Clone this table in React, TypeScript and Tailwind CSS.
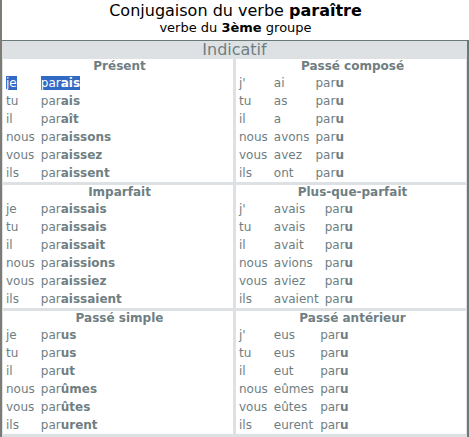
const simple = [
  {
    title: "Présent",
    rows: [
      ["je", "par", "ais"],
      ["tu", "par", "ais"],
      ["il", "par", "aît"],
      ["nous", "par", "aissons"],
      ["vous", "par", "aissez"],
      ["ils", "par", "aissent"],
    ],
  },
  {
    title: "Imparfait",
    rows: [
      ["je", "par", "aissais"],
      ["tu", "par", "aissais"],
      ["il", "par", "aissait"],
      ["nous", "par", "aissions"],
      ["vous", "par", "aissiez"],
      ["ils", "par", "aissaient"],
    ],
  },
  {
    title: "Passé simple",
    rows: [
      ["je", "par", "us"],
      ["tu", "par", "us"],
      ["il", "par", "ut"],
      ["nous", "par", "ûmes"],
      ["vous", "par", "ûtes"],
      ["ils", "par", "urent"],
    ],
  },
];

const compound = [
  {
    title: "Passé composé",
    rows: [
      ["j'", "ai"],
      ["tu", "as"],
      ["il", "a"],
      ["nous", "avons"],
      ["vous", "avez"],
      ["ils", "ont"],
    ],
  },
  {
    title: "Plus-que-parfait",
    rows: [
      ["j'", "avais"],
      ["tu", "avais"],
      ["il", "avait"],
      ["nous", "avions"],
      ["vous", "aviez"],
      ["ils", "avaient"],
    ],
  },
  {
    title: "Passé antérieur",
    rows: [
      ["j'", "eus"],
      ["tu", "eus"],
      ["il", "eut"],
      ["nous", "eûmes"],
      ["vous", "eûtes"],
      ["ils", "eurent"],
    ],
  },
];

const SimpleCell = ({ tense, first }: { tense: (typeof simple)[number]; first: boolean }) => (
  <div className="bg-white pl-[3px]">
    <p className="text-center font-bold leading-[15px]">{tense.title}</p>
    <div className="grid grid-cols-[auto_1fr] gap-x-[6px] leading-[18px]">
      {tense.rows.map((r, i) => {
        const sel = first && i === 0;
        return (
          <div key={i} className="contents">
            <span>
              <span className={sel ? "bg-[#316ac5] text-white" : ""}>{r[0]}</span>
            </span>
            <span>
              <span className={sel ? "bg-[#316ac5] text-white" : ""}>
                {r[1]}
                <b>{r[2]}</b>
              </span>
            </span>
          </div>
        );
      })}
    </div>
  </div>
);

const CompoundCell = ({ tense }: { tense: (typeof compound)[number] }) => (
  <div className="bg-white pl-[3px]">
    <p className="text-center font-bold leading-[15px]">{tense.title}</p>
    <div className="grid grid-cols-[auto_auto_1fr] gap-x-[6px] leading-[18px]">
      {tense.rows.map((r, i) => (
        <div key={i} className="contents">
          <span>{r[0]}</span>
          <span>{r[1]}</span>
          <span>
            par<b>u</b>
          </span>
        </div>
      ))}
    </div>
  </div>
);

export default function App() {
  return (
    <div
      className="h-[437px] w-[469px] overflow-hidden border-l-2 border-[#7e7a74] bg-white"
      style={{ fontFamily: '"DejaVu Sans", Verdana, sans-serif' }}
    >
      <div className="flex h-[40px] flex-col items-center pt-[1px] text-black">
        <p className="text-[16px] leading-[20px]">
          Conjugaison du verbe <b>paraître</b>
        </p>
        <p className="text-[13px] leading-[12px] mt-[1px]">
          verbe du <b>3ème</b> groupe
        </p>
      </div>
      <div className="border-t border-r-2 border-[#6a7a7a] bg-[#dde1e4] px-[1px] pb-[3px] text-[12px] text-[#6f7e82]">
        <p className="h-[18px] text-center text-[16px] leading-[18px]">Indicatif</p>
        <div className="grid grid-cols-2 gap-[3px]">
          {simple.map((s, i) => (
            <div key={s.title} className="contents">
              <SimpleCell tense={s} first={i === 0} />
              <CompoundCell tense={compound[i]} />
            </div>
          ))}
        </div>
      </div>
    </div>
  );
}
